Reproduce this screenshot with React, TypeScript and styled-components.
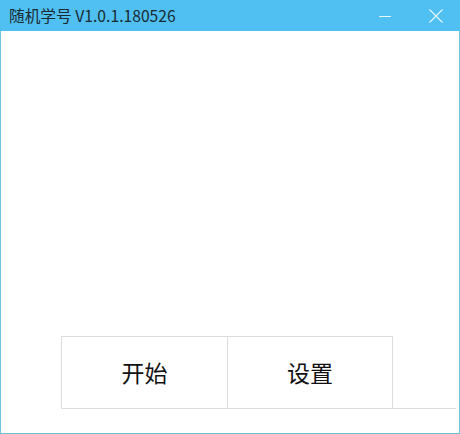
import styled, { createGlobalStyle } from 'styled-components';

const GlobalStyle = createGlobalStyle`
  html, body {
    margin: 0;
    padding: 0;
    background: #ffffff;
  }

  body {
    font-family: "Noto Sans CJK SC", "Noto Sans", sans-serif;
  }
`;

const App = () => {
  return (
    <>
      <GlobalStyle />
      <Window>
        <TitleBar>
          <Title>随机学号 V1.0.1.180526</Title>
          <Controls>
            <ControlButton aria-label="minimize" $offset={12}>
              <svg width="12" height="12" viewBox="0 0 12 12">
                <line x1="0" y1="6.5" x2="12" y2="6.5" stroke="#e8f7fd" strokeWidth="1" />
              </svg>
            </ControlButton>
            <ControlButton aria-label="close" $offset={3}>
              <svg width="14" height="14" viewBox="0 0 14 14">
                <path d="M0.5 0.5 L13.5 13.5 M13.5 0.5 L0.5 13.5" stroke="#e8f7fd" strokeWidth="1.1" />
              </svg>
            </ControlButton>
          </Controls>
        </TitleBar>

        <Body>
          <ButtonRow>
            <ActionButton>开始</ActionButton>
            <ActionButton>设置</ActionButton>
          </ButtonRow>
        </Body>
      </Window>
    </>
  );
};

export default App;

const Window = styled.div`
  width: 460px;
  height: 434px;
  display: flex;
  flex-direction: column;
  background: #ffffff;
`;

const TitleBar = styled.header`
  height: 31px;
  flex-shrink: 0;
  display: flex;
  align-items: center;
  justify-content: space-between;
  background: #4fc0f1;
  padding-left: 9px;
  box-sizing: border-box;
`;

const Title = styled.span`
  font-size: 15.7px;
  color: #1b2a33;
  line-height: 1;
  margin-top: 1px;
`;

const Controls = styled.div`
  display: flex;
  height: 100%;
`;

const ControlButton = styled.button<{ $offset: number }>`
  width: 46px;
  height: 100%;
  border: none;
  background: transparent;
  padding: 0 ${(p) => p.$offset}px 0 0;
  display: flex;
  align-items: center;
  justify-content: center;
`;

const Body = styled.main`
  flex: 1;
  display: flex;
  flex-direction: column;
  justify-content: flex-end;
  border: 1px solid #6cc3d8;
  border-top: none;
  padding: 0 3px 24px 60px;
`;

const ButtonRow = styled.div`
  display: flex;
  height: 72px;
  border-bottom: 1px solid #dcdcdc;
`;

const ActionButton = styled.button`
  width: 166px;
  height: 100%;
  border: none;
  border-top: 1px solid #dcdcdc;
  border-left: 1px solid #dcdcdc;
  background: #ffffff;
  font-family: "Noto Sans CJK SC", sans-serif;
  font-size: 23px;
  color: #111111;
  padding: 0 0 2px;

  &:last-child {
    border-right: 1px solid #dcdcdc;
  }
`;
